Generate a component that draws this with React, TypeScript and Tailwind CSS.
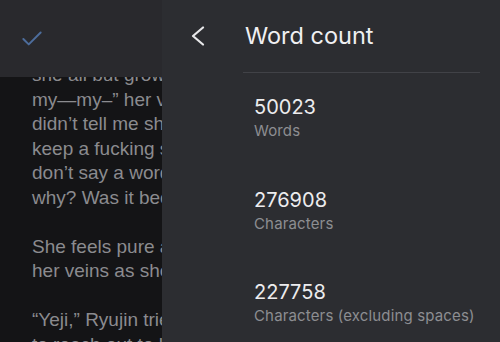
import { Check } from 'lucide-react';

const lines: (string | null)[] = [
  'she all but growls, “my—my–',
  'my—my–” her voice breaks',
  'didn’t tell me she was here',
  'keep a fucking secret. You',
  'don’t say a word to me and',
  'why? Was it because of me?',
  null,
  'She feels pure anger coursing',
  'her veins as she stands up',
  null,
  '“Yeji,” Ryujin tries, moving',
  'to reach out to her',
];

const stats = [
  { value: '50023', label: 'Words' },
  { value: '276908', label: 'Characters' },
  { value: '227758', label: 'Characters (excluding spaces)' },
];

export default function App() {
  return (
    <div className="relative w-[500px] h-[342px] overflow-hidden bg-[#141416]">
      {/* ── Documento por baixo ─────────────────────────────── */}
      <div className="flex h-full flex-col">
        <div className="flex h-[77px] shrink-0 items-center bg-[#29292d] pl-[19px]">
          <Check size={26} strokeWidth={1.8} className="text-[#4d6d9c]" />
        </div>
        <div className="flex-1 overflow-hidden">
          <div
            className="-mt-[14px] pl-[32px] text-[19px] leading-[24.5px] text-[#8b8b8f] whitespace-nowrap"
            style={{ fontFamily: '"Liberation Sans", Arial, sans-serif' }}
          >
            {lines.map((l, i) =>
              l === null ? <div key={i} className="h-[24.5px]" /> : <div key={i}>{l}</div>
            )}
          </div>
        </div>
      </div>

      {/* ── Painel de contagem ──────────────────────────────── */}
      <div
        className="absolute inset-y-0 left-[162px] right-0 bg-[#2c2d31]"
        style={{ fontFamily: 'Inter, "Noto Sans", sans-serif' }}
      >
        <div className="flex h-[72px] items-center">
          <div className="flex w-[83px] pl-[29px]">
            <svg width="14" height="20" viewBox="0 0 14 20" fill="none" className="-mt-[1px]">
              <polyline
                points="12,1.5 2,10 12,18.5"
                stroke="#e8e8ea"
                strokeWidth="2.2"
                strokeLinecap="round"
                strokeLinejoin="round"
              />
            </svg>
          </div>
          <span className="text-[23.5px] text-[#f0f0f2]">Word count</span>
        </div>
        <div className="ml-[81px] mr-[20px] h-px bg-[#414247]" />
        <div className="pl-[92px] pt-[21px]">
          {stats.map((s) => (
            <div key={s.value} className="h-[92.5px]">
              <div className="text-[20px] leading-[26px] text-[#ececee]">{s.value}</div>
              <div className="text-[15px] leading-[22px] tracking-[0.15px] text-[#8d8e92]">{s.label}</div>
            </div>
          ))}
        </div>
      </div>
    </div>
  );
}
